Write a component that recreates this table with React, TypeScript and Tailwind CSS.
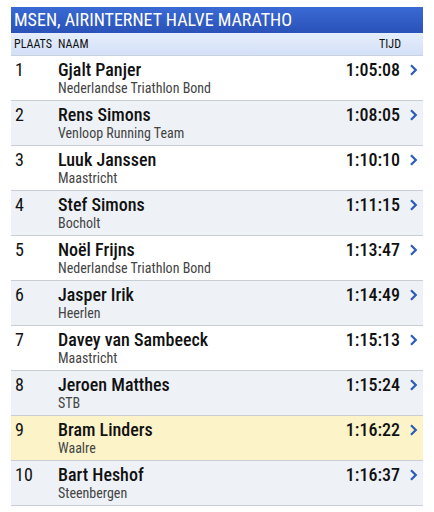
import React from "react";

const rows = [
  { p: "1", n: "Gjalt Panjer", c: "Nederlandse Triathlon Bond", t: "1:05:08" },
  { p: "2", n: "Rens Simons", c: "Venloop Running Team", t: "1:08:05" },
  { p: "3", n: "Luuk Janssen", c: "Maastricht", t: "1:10:10" },
  { p: "4", n: "Stef Simons", c: "Bocholt", t: "1:11:15" },
  { p: "5", n: "Noël Frijns", c: "Nederlandse Triathlon Bond", t: "1:13:47" },
  { p: "6", n: "Jasper Irik", c: "Heerlen", t: "1:14:49" },
  { p: "7", n: "Davey van Sambeeck", c: "Maastricht", t: "1:15:13" },
  { p: "8", n: "Jeroen Matthes", c: "STB", t: "1:15:24" },
  { p: "9", n: "Bram Linders", c: "Waalre", t: "1:16:22" },
  { p: "10", n: "Bart Heshof", c: "Steenbergen", t: "1:16:37" },
];

function Chevron() {
  return (
    <svg width="9" height="12" viewBox="0 0 9 12" className="shrink-0">
      <path d="M2 1.2 L6.8 6 L2 10.8" fill="none" stroke="#2a5cb8" strokeWidth="2.2" />
    </svg>
  );
}

export default function App() {
  return (
    <div
      className="w-[434px] h-[512px] bg-white pt-[7px] px-[11px]"
      style={{ fontFamily: "Roboto, 'Liberation Sans', sans-serif", fontStretch: "condensed" }}
    >
      <div className="h-[26px] bg-gradient-to-b from-[#3a6ad4] to-[#2a52b8] text-white text-[18px] leading-[26px] pl-[3px]">
        MSEN, AIRINTERNET HALVE MARATHO
      </div>
      <div className="h-[23px] bg-gradient-to-b from-[#e6eefc] to-[#d3e0f6] border-b border-[#c8d2e0] flex items-center text-[12px] text-[#111] pl-[3px] pr-[22px]">
        <span className="w-[44px]">PLAATS</span>
        <span className="flex-1">NAAM</span>
        <span>TIJD</span>
      </div>
      {rows.map((r, i) => {
        const bg = r.p === "9" ? "bg-[#fcf3c9]" : i % 2 === 1 ? "bg-[#eef2f6]" : "bg-white";
        return (
          <div key={r.p} className={`${bg} h-[45px] border-b border-[#c9ced4] flex pl-[4px] pr-[5px] pt-[3px]`}>
            <div className="w-[43px] text-[18px] leading-[21px] text-[#111]">{r.p}</div>
            <div className="flex-1 flex flex-col">
              <span className="text-[18px] leading-[21px] font-medium text-[#111]">{r.n}</span>
              <span className="text-[14px] leading-[16px] text-[#444]">{r.c}</span>
            </div>
            <div className="flex items-start gap-[9px]">
              <span className="text-[18px] leading-[21px] font-medium text-[#111]">{r.t}</span>
              <div className="pt-[5px]"><Chevron /></div>
            </div>
          </div>
        );
      })}
    </div>
  );
}
